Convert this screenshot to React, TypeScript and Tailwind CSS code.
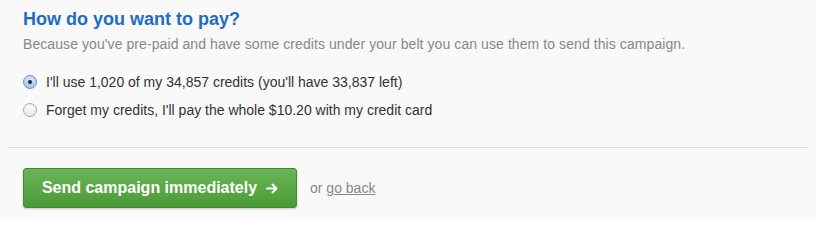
import React from 'react';

function Radio({ checked, onSelect }: { checked: boolean; onSelect: () => void }) {
  return (
    <button
      type="button"
      role="radio"
      aria-checked={checked}
      onClick={onSelect}
      className={`w-[14px] h-[14px] rounded-full border flex items-center justify-center shrink-0 shadow-[inset_0_1px_1px_rgba(0,0,0,0.08)] ${
        checked
          ? 'border-[#6f8fb5] bg-gradient-to-b from-[#d6e8fa] to-[#9cc3ec]'
          : 'border-[#a9a9a9] bg-gradient-to-b from-[#ffffff] to-[#e9e9e9]'
      }`}
    >
      {checked && <span className="w-[4px] h-[4px] rounded-full bg-[#1d2a3a]" />}
    </button>
  );
}

export default function App() {
  const [choice, setChoice] = React.useState('credits');

  return (
    <div className="w-[816px] h-[219px] bg-[#f9f9f9] font-['Liberation_Sans',Arial,sans-serif] overflow-hidden">
      <div className="px-[23px] pt-[8px]">
        <h2 className="text-[18px] leading-[22px] font-bold text-[#1f6dc2]">How do you want to pay?</h2>
        <p className="mt-[5px] text-[14px] leading-[18px] tracking-[0.08px] text-[#888]">
          Because you've pre-paid and have some credits under your belt you can use them to send this campaign.
        </p>
        <div className="mt-[20px] flex flex-col gap-[10px]">
          <label className="flex items-center gap-[9px] text-[14px] leading-[18px] text-[#333]">
            <Radio checked={choice === 'credits'} onSelect={() => setChoice('credits')} />
            I'll use 1,020 of my 34,857 credits (you'll have 33,837 left)
          </label>
          <label className="flex items-center gap-[9px] text-[14px] leading-[18px] text-[#333]">
            <Radio checked={choice === 'card'} onSelect={() => setChoice('card')} />
            Forget my credits, I'll pay the whole $10.20 with my credit card
          </label>
        </div>
      </div>
      <div className="mx-[8px] mt-[28px] border-t border-[#dedede]" />
      <div className="px-[23px] pt-[20px] flex items-center gap-[13px]">
        <button className="h-[40px] w-[274px] rounded-[3px] border border-[#3f8a2e] bg-gradient-to-b from-[#6bb657] to-[#4a9a36] text-white text-[16px] font-bold shadow-[0_1px_2px_rgba(0,0,0,0.2)] flex items-center justify-center gap-[9px]">
          Send campaign immediately
          <svg width="12" height="11" viewBox="0 0 12 11" fill="none" stroke="white" strokeWidth="2" strokeLinecap="round" strokeLinejoin="round">
            <path d="M1 5.5h9.5M6.5 1.5l4 4-4 4" />
          </svg>
        </button>
        <span className="text-[14px] text-[#888]">
          or <a href="#" className="underline">go back</a>
        </span>
      </div>
    </div>
  );
}
